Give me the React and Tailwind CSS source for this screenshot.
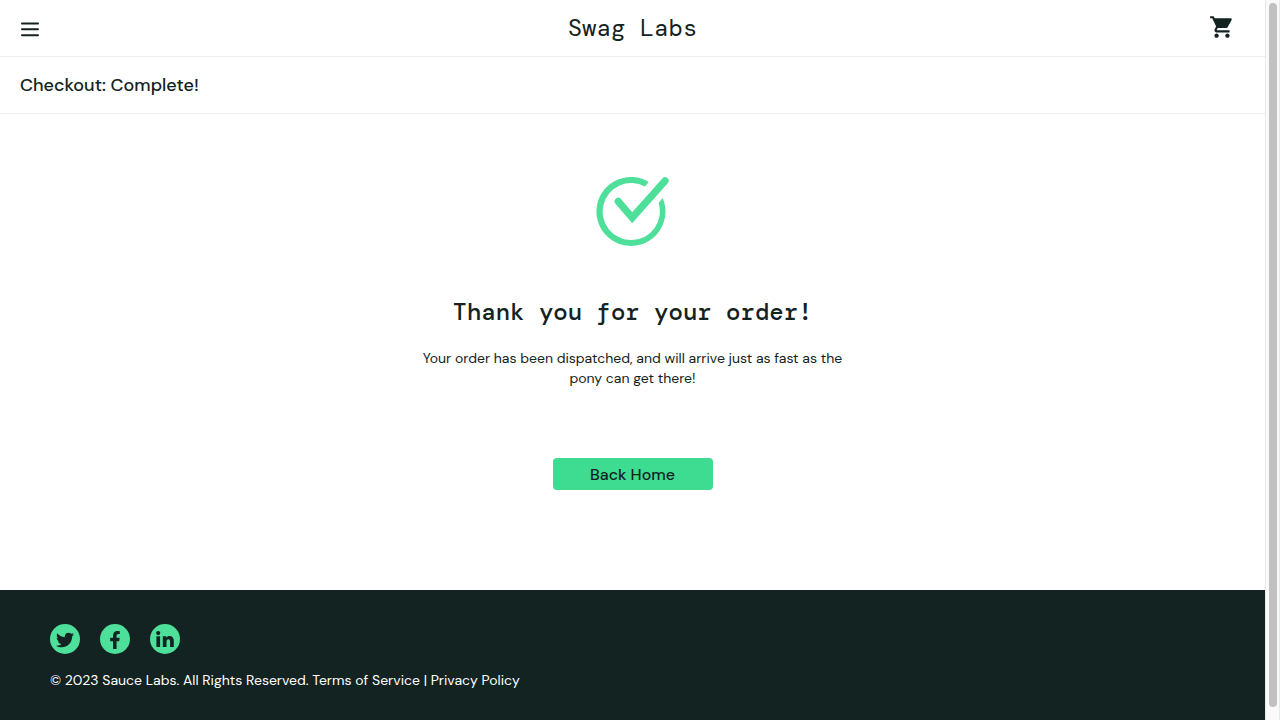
import { FaFacebookF, FaTwitter } from "react-icons/fa";
import { MdShoppingCart } from "react-icons/md";

function LinkedInMark({ className }) {
  return (
    <svg viewBox="0 0 18 16" fill="currentColor" className={className} aria-hidden="true">
      <circle cx="2.2" cy="2.1" r="2.1" />
      <path d="M0.4 5.3H4.1V16H0.4Z" />
      <path d="M6.8 5.3H10.2V6.8C10.9 5.6 12.1 5 13.5 5C16.6 5 17.8 7 17.8 10V16H14.1V10.7C14.1 9.1 13.6 8.2 12.4 8.2C11.1 8.2 10.5 9.1 10.5 10.7V16H6.8Z" />
    </svg>
  );
}

const socials = [
  { label: "Twitter", Icon: FaTwitter, size: "mt-0.5 size-[18px]" },
  { label: "Facebook", Icon: FaFacebookF, size: "mt-0.5 size-[18px]" },
  { label: "LinkedIn", Icon: LinkedInMark, size: "h-4 w-[18px]" },
];

function CheckMark() {
  return (
    <svg viewBox="0 0 74 70" className="h-[70px] w-[74px]" role="img" aria-label="Order complete">
      <path
        fill="#4ee09b"
        d="M52.7 4.9A34.5 34.5 0 1 0 66.7 21L62.6 26A28.6 28.6 0 1 1 49 9.4Z"
      />
      <path
        fill="none"
        stroke="#4ee09b"
        strokeWidth="7.2"
        strokeLinecap="round"
        d="M22.2 24.4L36.2 40.7L69 3.8"
      />
    </svg>
  );
}

export default function App() {
  return (
    <div className="flex min-h-screen bg-white font-['DM_Sans','Inter',sans-serif] text-[#132322]">
      <div className="flex min-w-0 flex-1 flex-col">
        <header>
          <div className="grid h-[57px] grid-cols-3 items-center border-b border-[#ededed] px-5">
            <button type="button" aria-label="Open Menu" className="flex w-5 justify-center pt-0.5">
              <svg viewBox="0 0 20 16" className="h-4 w-5" stroke="#132322" strokeWidth="2" strokeLinecap="round">
                <path d="M2 2.5H18M2 8.3H18M2 14.2H18" />
              </svg>
            </button>
            <div className="text-center font-['DM_Mono','DejaVu_Sans_Mono',monospace] text-2xl">Swag Labs</div>
            <a href="#cart" aria-label="Shopping cart" className="mr-2.5 mb-[3px] justify-self-end">
              <MdShoppingCart className="size-[26px]" />
            </a>
          </div>
          <div className="flex h-[57px] items-center border-b border-[#ededed] px-5">
            <h1 className="text-lg font-medium">Checkout: Complete!</h1>
          </div>
        </header>

        <main className="flex flex-1 flex-col items-center px-5 pt-[63px] pb-[100px]">
          <CheckMark />
          <h2 className="mt-[49px] text-center font-['DM_Mono','DejaVu_Sans_Mono',monospace] text-2xl font-medium">
            Thank you for your order!
          </h2>
          <p className="mt-5 max-w-[450px] text-center text-sm leading-5">
            Your order has been dispatched, and will arrive just as fast as the pony can get there!
          </p>
          <button
            type="button"
            className="mt-[70px] h-8 w-40 rounded-sm bg-[#3ddc91] pt-0.5 text-base font-medium"
          >
            Back Home
          </button>
        </main>

        <footer className="bg-[#132322] px-[50px] pt-[34px] pb-[30px] text-white">
          <ul className="flex gap-5">
            {socials.map(({ label, Icon, size }) => (
              <li key={label}>
                <a
                  href={"#" + label.toLowerCase()}
                  aria-label={label}
                  className="flex size-[30px] items-center justify-center rounded-full bg-[#4ee09b] text-[#132322]"
                >
                  <Icon className={size} />
                </a>
              </li>
            ))}
          </ul>
          <p className="mt-4 text-sm">
            © 2023 Sauce Labs. All Rights Reserved. Terms of Service | Privacy Policy
          </p>
        </footer>
      </div>
      <div aria-hidden="true" className="flex w-[15px] shrink-0 justify-center border-x border-[#e8e8e8] bg-[#fafafa] pt-[3px] pb-[13px]">
        <div className="w-2 rounded-full bg-[#c1c1c1]" />
      </div>
    </div>
  );
}
